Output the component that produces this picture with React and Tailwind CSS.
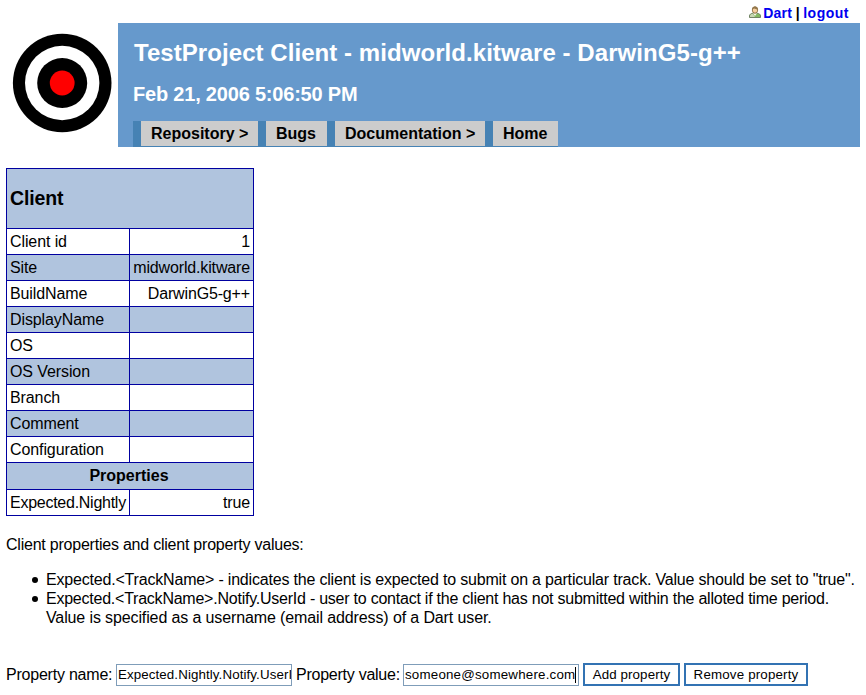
const rows = [
  ['Client id', '1'],
  ['Site', 'midworld.kitware'],
  ['BuildName', 'DarwinG5-g++'],
  ['DisplayName', ''],
  ['OS', ''],
  ['OS Version', ''],
  ['Branch', ''],
  ['Comment', ''],
  ['Configuration', ''],
];

const nav = [
  ['Repository >', 'w-[125px]'],
  ['Bugs', 'w-[69px]'],
  ['Documentation >', 'w-[158px]'],
  ['Home', 'w-[73px]'],
];

function Row({ label, value, shaded, tight }) {
  const cell = 'h-[26px] border-r border-b border-[#0000a0] px-[3px] leading-[19px]';
  return (
    <tr className={shaded ? 'bg-[#b0c4de]' : 'bg-white'}>
      <td className={cell + (tight ? ' tracking-[-0.26px]' : ' tracking-[-0.1px]')}>{label}</td>
      <td className={cell + ' text-right tracking-[-0.15px]'}>{value}</td>
    </tr>
  );
}

function UserIcon() {
  return (
    <svg className="mr-[2px] mt-[6px] h-[12px] w-[12px] shrink-0" viewBox="0 0 12 12">
      <path d="M.5 11.500V10c0-1.700 1.500-2.500 3.500-2.800h4c2 .3 3.500 1.100 3.500 2.800v1.500z" fill="#84b860" stroke="#66785a" strokeWidth=".9" />
      <path d="M1 11V10c0-1.200 1-1.900 2.800-2.300L6 11z" fill="#c9d6b4" />
      <path d="M4 7.200 6 10l2-2.800z" fill="#f4f4e8" />
      <ellipse cx="6" cy="4" rx="2.700" ry="3.200" fill="#f6cf9f" stroke="#8b6d43" strokeWidth=".9" />
      <path d="M3 3.700C3 1.500 4.300.5 6 .5s3 1 3 3.200C7.500 3.400 6 2.500 5 2.400 4.300 2.800 3.600 3.300 3 3.700z" fill="#94784c" />
    </svg>
  );
}

function Item({ children }) {
  return (
    <li className="flex">
      <span className="ml-[26px] mr-[8px] mt-[7px] h-[6px] w-[6px] shrink-0 rounded-full bg-black" />
      <div>{children}</div>
    </li>
  );
}

export default function App() {
  return (
    <div className="h-[695px] w-[866px] overflow-hidden bg-white pl-[6px] font-['Liberation_Sans',Arial,sans-serif] text-[16px] text-black">
      <div className="flex h-[23px] justify-end pr-[17px] text-[14px] font-bold leading-[26px]">
        <UserIcon />
        <a className="tracking-[0.25px] text-[#0000f0]">Dart</a>
        <span className="w-[11px] text-center">|</span>
        <a className="tracking-[0.5px] text-[#0000f0]">logout</a>
      </div>

      <header className="flex h-[124px]">
        <div className="w-[112px] shrink-0 pl-[6px] pt-[10px]">
          <svg className="h-[100px] w-[100px]" viewBox="0 0 100 100">
            <circle cx="50.200" cy="50" r="49.300" fill="#000" />
            <circle cx="50.200" cy="50" r="37.200" fill="#fff" />
            <circle cx="50.200" cy="50" r="25" fill="#000" />
            <circle cx="50.200" cy="50" r="12.400" fill="#f00" />
          </svg>
        </div>
        <div className="flex w-[742px] flex-col bg-[#6699cc] pl-[15px] font-bold">
          <h1 className="ml-px mt-[15px] h-[30px] whitespace-nowrap text-[24px] leading-[30px] tracking-[0.06px] text-white">TestProject Client - midworld.kitware - DarwinG5-g++</h1>
          <h2 className="mt-[14px] h-[24px] whitespace-nowrap text-[20px] leading-[24px] tracking-[-0.2px] text-white">Feb 21, 2006 5:06:50 PM</h2>
          <nav className="mt-[15px] flex h-[26px] w-[425px] bg-[#4682b4] pb-px">
            {nav.map(([name, width]) => (
              <div key={name} className={'flex pl-[8px] ' + width}>
                <a className="flex-1 whitespace-nowrap bg-[#cccccc] pl-[10px] leading-[25px]">{name}</a>
              </div>
            ))}
          </nav>
        </div>
      </header>

      <table className="mt-[21px] w-[248px] table-fixed border-separate border-spacing-0 whitespace-nowrap border-t border-l border-[#0000a0]">
        <colgroup>
          <col className="w-[123px]" />
          <col className="w-[124px]" />
        </colgroup>
        <tbody>
          <tr className="bg-[#b0c4de]">
            <th colSpan="2" className="h-[60px] border-r border-b border-[#0000a0] px-[3px] text-left text-[19.500px] tracking-[-0.15px]">Client</th>
          </tr>
          {rows.map(([label, value], i) => (
            <Row key={label} label={label} value={value} shaded={i % 2 === 1} />
          ))}
          <tr className="bg-[#b0c4de]">
            <th colSpan="2" className="h-[27px] border-r border-b border-[#0000a0] pb-[2px] pr-[2px] leading-[19px]">Properties</th>
          </tr>
          <Row label="Expected.Nightly" value="true" tight />
        </tbody>
      </table>

      <p className="mt-[19px] leading-[19px] tracking-[-0.225px]">Client properties and client property values:</p>
      <ul className="mt-[16px] whitespace-nowrap leading-[19px]">
        <Item>
          <span className="tracking-[-0.19px]">Expected.&lt;TrackName&gt; - indicates the client is expected to submit on a particular track. Value should be set to "true".</span>
        </Item>
        <Item>
          <span className="tracking-[-0.235px]">Expected.&lt;TrackName&gt;.Notify.UserId - user to contact if the client has not submitted within the alloted time period.</span>
          <br />
          <span className="tracking-[-0.12px]">Value is specified as a username (email address) of a Dart user.</span>
        </Item>
      </ul>

      <form className="mt-[36px] flex h-[23px] whitespace-nowrap">
        <label className="w-[110px] leading-[23px] tracking-[-0.22px]">Property name:</label>
        <div className="mt-px h-[22px] w-[176px] overflow-hidden border border-[#7f9db9] pl-px text-[13.330px] leading-[19px] tracking-[0.1px]">Expected.Nightly.Notify.UserId</div>
        <label className="ml-[4px] w-[107px] leading-[23px] tracking-[-0.25px]">Property value:</label>
        <div className="mt-px flex h-[22px] w-[176px] border border-[#7f9db9] pl-px text-[13.330px] leading-[19px]">
          <span className="tracking-[0.2px]">someone@somewhere.com</span>
          <span className="mt-[2px] h-[16px] w-px bg-black" />
        </div>
        <button type="button" className="ml-[4px] w-[97px] border-2 border-[#3373b3] pt-px text-[13.330px] leading-[18px] tracking-[0.1px]">Add property</button>
        <button type="button" className="ml-[4px] w-[124px] border-2 border-[#3373b3] pt-px text-[13.330px] leading-[18px] tracking-[0.17px]">Remove property</button>
      </form>
    </div>
  );
}
